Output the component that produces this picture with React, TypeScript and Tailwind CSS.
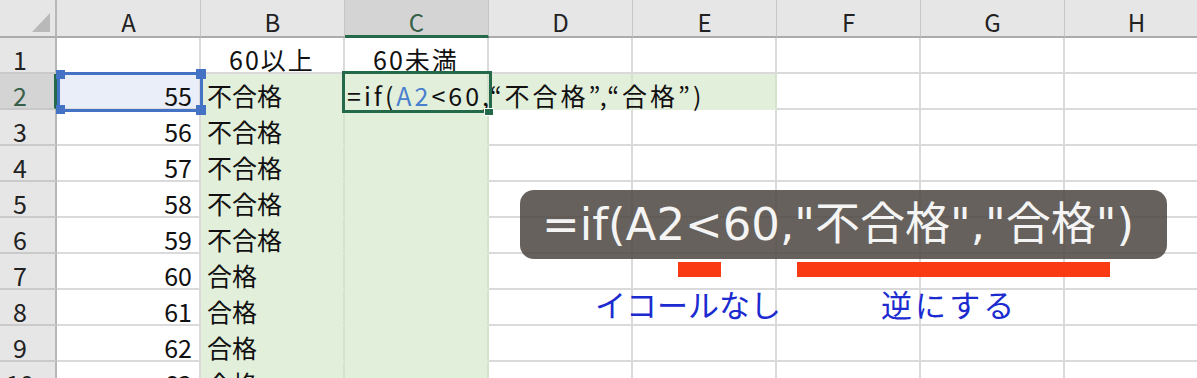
import clsx from "clsx";

const COLS = ["A", "B", "C", "D", "E", "F", "G", "H"];

type Row = { n: number; a: string; b: string; c?: string };

const ROWS: Row[] = [
  { n: 1, a: "", b: "60以上", c: "60未満" },
  { n: 2, a: "55", b: "不合格" },
  { n: 3, a: "56", b: "不合格" },
  { n: 4, a: "57", b: "不合格" },
  { n: 5, a: "58", b: "不合格" },
  { n: 6, a: "59", b: "不合格" },
  { n: 7, a: "60", b: "合格" },
  { n: 8, a: "61", b: "合格" },
  { n: 9, a: "62", b: "合格" },
  { n: 10, a: "63", b: "合格" },
];

function isGreen(row: number, col: string) {
  if (row < 2) return false;
  if (col === "B" || col === "C") return true;
  return row === 2 && (col === "D" || col === "E");
}

function DataCell({ row, col }: { row: Row; col: string }) {
  const green = isGreen(row.n, col);
  const active = row.n === 2 && col === "C";
  const ref = row.n === 2 && col === "A";

  let content: React.ReactNode = null;
  let align = "justify-start pl-[6px]";
  if (col === "A") {
    content = row.a;
    align = "justify-end pr-[7px]";
  } else if (col === "B") {
    content = row.b;
    if (row.n === 1) align = "justify-center tracking-[2px]";
  } else if (col === "C" && row.n === 1) {
    content = row.c;
    align = "justify-center tracking-[2px]";
  } else if (active) {
    align = "justify-start pl-[2px]";
    content = (
      <span className="whitespace-nowrap tracking-[3px]">
        =if(<span className="text-[#4a7fcf]">A2</span>&lt;60,“不合格”,“合格”)
      </span>
    );
  }

  return (
    <div
      className={clsx(
        "flex items-end border-r-2 border-b-2 text-[25px] leading-none text-[#111]",
        align,
        green ? "bg-[#e2efda] border-r-[#d5e2cc] border-b-[#e2efda]" : "border-[#dadada]",
        ref && "bg-[#e9eef8]",
        active && "relative z-10"
      )}
    >
      {content}
    </div>
  );
}

export default function App() {
  return (
    <div className="relative w-[1197px] h-[378px] overflow-hidden bg-white font-['Noto_Sans_CJK_JP','Noto_Sans',sans-serif]">
      <div className="grid grid-cols-[57px_repeat(8,144px)] grid-rows-[38px_repeat(10,36px)]">
        {/* corner */}
        <div className="flex items-end justify-end pr-[5px] pb-[4px] bg-[#e6e6e6] border-r-2 border-b-2 border-r-[#b8b8b8] border-b-[#ababab]">
          <svg width="18" height="19" viewBox="0 0 18 19">
            <polygon points="18,0 18,19 0,19" fill="#b9b9b9" />
          </svg>
        </div>
        {COLS.map((c) =>
          c === "C" ? (
            <div
              key={c}
              className="flex items-end justify-center pb-[1px] bg-[#d4d4d4] border-r border-b-[3px] border-r-[#c4c4c4] border-b-[#24694a] text-[24px] leading-none text-[#37604a]"
            >
              {c}
            </div>
          ) : (
            <div
              key={c}
              className="flex items-end justify-center pb-[2px] bg-[#e6e6e6] border-r border-b-2 border-r-[#c6c6c6] border-b-[#ababab] text-[24px] leading-none text-[#222]"
            >
              {c}
            </div>
          )
        )}

        {ROWS.map((r) => (
          <div key={r.n} className="contents">
            {r.n === 2 ? (
              <div className="flex items-end justify-center pr-[14px] bg-[#d4d4d4] border-r-[3px] border-b-2 border-r-[#24694a] border-b-[#c8c8c8] text-[25px] leading-none text-[#37604a]">
                {r.n}
              </div>
            ) : (
              <div className="flex items-end justify-center pr-[15px] bg-[#e6e6e6] border-r-2 border-b-2 border-r-[#b6b6b6] border-b-[#cacaca] text-[25px] leading-none text-[#222]">
                {r.n}
              </div>
            )}
            {COLS.map((c) => (
              <DataCell key={c} row={r} col={c} />
            ))}
          </div>
        ))}
      </div>

      {/* reference border on A2 */}
      <div className="absolute left-[57px] top-[72px] w-[146px] h-[40px] border-[3px] border-[#4472c4]">
        <div className="absolute left-[-4px] top-[-5px] w-[9px] h-[9px] bg-[#4472c4]" />
        <div className="absolute right-[-6px] top-[-6px] w-[10px] h-[10px] bg-[#4472c4]" />
        <div className="absolute left-[-4px] bottom-[-5px] w-[9px] h-[9px] bg-[#4472c4]" />
        <div className="absolute right-[-6px] bottom-[-6px] w-[10px] h-[10px] bg-[#4472c4]" />
      </div>

      {/* active cell C2 */}
      <div className="absolute left-[342px] top-[71px] w-[150px] h-[42px] border-[3px] border-[#24694a] z-20">
        <div className="absolute right-[-5px] bottom-[-6px] w-[10px] h-[8px] bg-[#24694a] border border-white" />
      </div>

      {/* annotation */}
      <div className="absolute left-[520px] top-[190px] z-30 flex flex-col">
        <div className="w-[647px] h-[69px] rounded-[14px] bg-[#4b4540d9] pl-[22px] pt-[12px]">
          <span className="whitespace-nowrap text-[45px] leading-none text-[#f4f4f4] font-['DejaVu_Sans','Noto_Sans_CJK_JP',sans-serif]">
            =if(A2&lt;60,"不合格","合格")
          </span>
        </div>
        <div className="flex mt-[3px] h-[15px]">
          <div className="ml-[158px] w-[43px] bg-[#fa3a12]" />
          <div className="ml-[76px] w-[313px] bg-[#fa3a12]" />
        </div>
        <div className="flex mt-[11px] text-[31px] leading-none text-[#1b2bd0] whitespace-nowrap">
          <span className="ml-[75px] w-[186px]">イコールなし</span>
          <span className="ml-[100px] tracking-[3px]">逆にする</span>
        </div>
      </div>
    </div>
  );
}
